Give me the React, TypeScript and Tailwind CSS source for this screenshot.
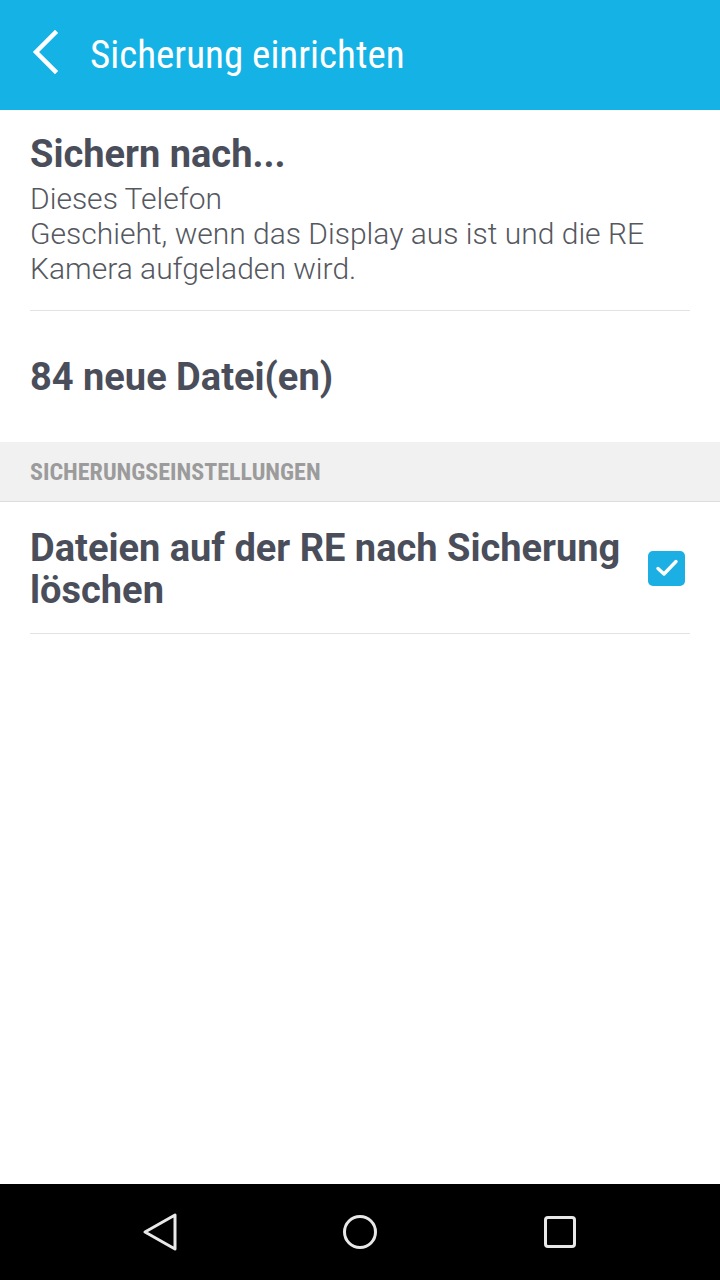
import React from 'react';

const roboto = { fontFamily: 'Roboto, "Liberation Sans", sans-serif' };
const condensed = { fontFamily: '"Roboto Condensed", Roboto, "Liberation Sans", sans-serif' };

const BackIcon = () => (
  <svg width="30" height="46" viewBox="0 0 30 46" fill="none">
    <path d="M26 4 L7 23 L26 42" stroke="white" strokeWidth="4.5" strokeLinecap="square" />
  </svg>
);

const Checkbox: React.FC<{ checked: boolean }> = ({ checked }) => (
  <div className="flex h-[35px] w-[37px] shrink-0 items-center justify-center rounded-[5px] bg-[#1cafe4]">
    {checked && (
      <svg width="26" height="26" viewBox="0 0 26 26" fill="none">
        <path d="M4 13.5 L10 19 L22 6.5" stroke="white" strokeWidth="3.4" strokeLinecap="round" strokeLinejoin="round" />
      </svg>
    )}
  </div>
);

export default function App() {
  return (
    <div className="flex h-[1280px] w-[720px] flex-col bg-white" style={roboto}>
      {/* Action bar */}
      <header className="flex h-[110px] shrink-0 items-center bg-[#15b2e5]">
        <div className="ml-[29px] mb-[6px] flex w-[61px] items-center">
          <BackIcon />
        </div>
        <h1 className="text-[39px] leading-[46px] text-white" style={condensed}>
          Sicherung einrichten
        </h1>
      </header>

      <main className="flex flex-1 flex-col">
        {/* Sichern nach */}
        <div className="mx-[30px] border-b border-[#e2e2e2] pt-[22px] pb-[24px]">
          <div className="text-[38px] font-bold leading-[44px] text-[#4a4e5a]">Sichern nach...</div>
          <div className="mt-[5px] text-[30px] font-light leading-[35px] text-[#55585f]">
            <div>Dieses Telefon</div>
            <div>Geschieht, wenn das Display aus ist und die RE Kamera aufgeladen wird.</div>
          </div>
        </div>

        {/* Neue Dateien */}
        <div className="flex h-[131px] items-center px-[30px]">
          <div className="text-[38px] font-bold leading-[44px] text-[#4a4e5a]">84 neue Datei(en)</div>
        </div>

        {/* Section header */}
        <div className="flex h-[60px] items-center border-b border-[#dcdcdc] bg-[#f1f1f1] px-[30px]">
          <span className="text-[24px] font-bold leading-[28px] text-[#9b9b9b]" style={condensed}>
            SICHERUNGSEINSTELLUNGEN
          </span>
        </div>

        {/* Checkbox row */}
        <div className="mx-[30px] flex items-center gap-4 border-b border-[#e2e2e2] pt-[25px] pb-[22px]">
          <div className="flex-1 text-[38px] font-bold leading-[42px] text-[#4a4e5a]">
            Dateien auf der RE nach Sicherung löschen
          </div>
          <div className="mr-[5px] mb-[2px]">
            <Checkbox checked />
          </div>
        </div>
      </main>

      {/* Navigation bar */}
      <nav className="flex h-[96px] shrink-0 items-center justify-center gap-[160px] bg-black">
        <svg width="40" height="40" viewBox="0 0 40 40" fill="none">
          <path d="M35 3 L35 37 L5 20 Z" stroke="#e8e8e8" strokeWidth="3" strokeLinejoin="round" />
        </svg>
        <svg width="40" height="40" viewBox="0 0 40 40" fill="none">
          <circle cx="20" cy="20" r="15.5" stroke="#e8e8e8" strokeWidth="3" />
        </svg>
        <svg width="40" height="40" viewBox="0 0 40 40" fill="none">
          <rect x="5.5" y="5.5" width="29" height="29" rx="2.5" stroke="#e8e8e8" strokeWidth="3" />
        </svg>
      </nav>
    </div>
  );
}
